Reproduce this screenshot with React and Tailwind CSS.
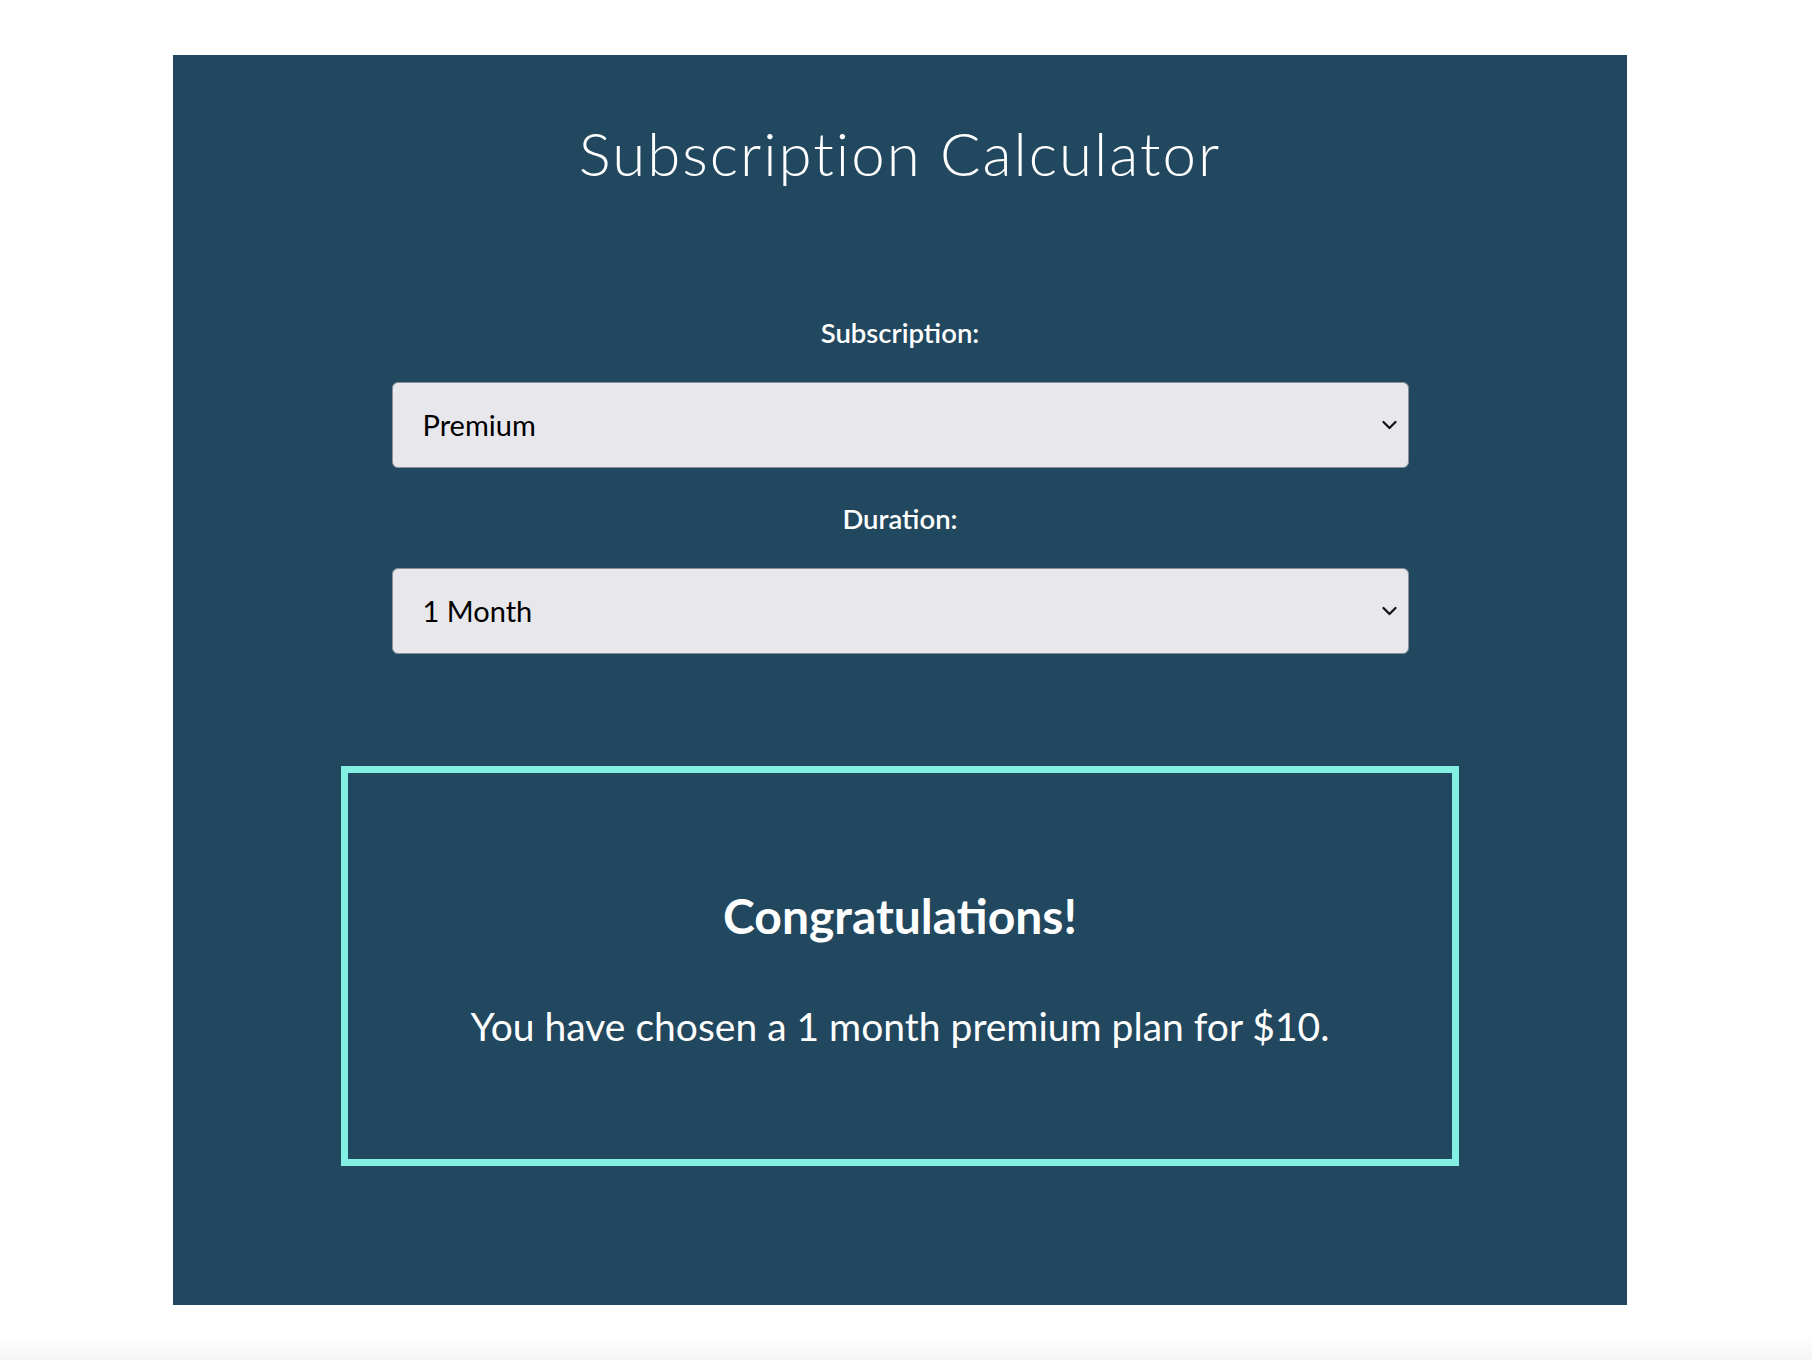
import { useState } from 'react';

const PRICES = { basic: 5, premium: 10 };

const Chevron = () => (
  <svg
    className="pointer-events-none absolute right-[12px] top-1/2 -translate-y-1/2"
    width="15"
    height="10"
    viewBox="0 0 15 10"
    fill="none"
  >
    <path d="M1.5 2 L7.5 8 L13.5 2" stroke="#111" strokeWidth="2.2" strokeLinecap="round" strokeLinejoin="round" />
  </svg>
);

const Field = ({ label, value, onChange, options }) => (
  <div className="flex flex-col items-center">
    <label className="text-[27.5px] leading-[32px] font-semibold text-white">{label}</label>
    <div className="relative mt-[33px] w-[1017px]">
      <select
        value={value}
        onChange={(e) => onChange(e.target.value)}
        className="h-[86px] w-full appearance-none rounded-[6px] border border-[#8a8f99] bg-[#e8e7ec] pl-[30px] text-[29px] text-black outline-none"
      >
        {options.map((opt) => (
          <option key={opt.value} value={opt.value}>
            {opt.label}
          </option>
        ))}
      </select>
      <Chevron />
    </div>
  </div>
);

const App = () => {
  const [plan, setPlan] = useState('premium');
  const [months, setMonths] = useState('1');

  const total = PRICES[plan] * Number(months);
  const monthLabel = months === '1' ? '1 month' : `${months} months`;

  return (
    <div className="min-h-[1360px] bg-white font-['Lato','Open_Sans',sans-serif]">
      <div className="ml-[173px] mt-[55px] h-[1250px] w-[1454px] bg-[#22485f] pt-[63px]">
        <h1 className="text-center text-[60px] leading-[70px] font-light tracking-[2px] text-white">Subscription Calculator</h1>

        <div className="mt-[129px] flex flex-col gap-[35px]">
          <Field
            label="Subscription:"
            value={plan}
            onChange={setPlan}
            options={[
              { value: 'basic', label: 'Basic' },
              { value: 'premium', label: 'Premium' },
            ]}
          />
          <Field
            label="Duration:"
            value={months}
            onChange={setMonths}
            options={[
              { value: '1', label: '1 Month' },
              { value: '3', label: '3 Months' },
              { value: '6', label: '6 Months' },
              { value: '12', label: '12 Months' },
            ]}
          />
        </div>

        {/* result */}
        <div className="mx-auto mt-[112px] flex h-[400px] w-[1118px] flex-col items-center border-[7px] border-[#83efe0] pt-[114px]">
          <h2 className="text-[48px] leading-[58px] font-bold text-white">Congratulations!</h2>
          <p className="mt-[58px] text-[39px] leading-[46px] text-white">
            You have chosen a {monthLabel} {plan} plan for ${total}.
          </p>
        </div>
      </div>
      <div className="mt-[30px] h-[25px] bg-gradient-to-b from-white to-[#f6f6f6]" />
    </div>
  );
};

export default App;
